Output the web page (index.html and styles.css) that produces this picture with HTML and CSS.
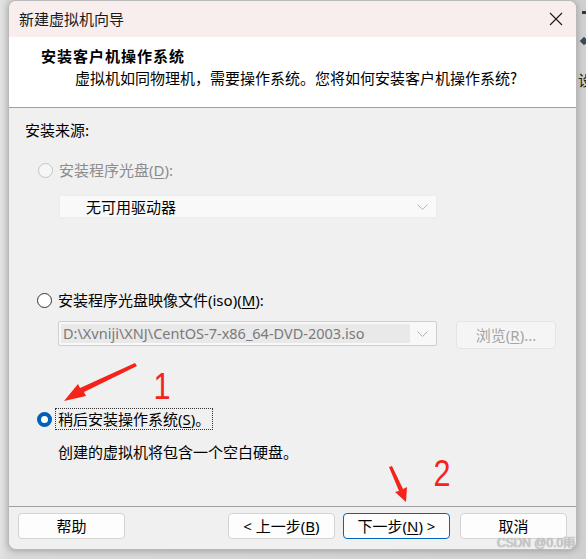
FILE: index.html
```html
<!DOCTYPE html>
<html lang="zh">
<head>
<meta charset="utf-8">
<title>新建虚拟机向导</title>
<link rel="stylesheet" href="styles.css">
</head>
<body>
<div class="desk">
  <div class="bgwin">
    <span class="bg-t"></span>
    <span class="bg-d"></span>
    <span class="bg-c">设</span>
  </div>
  <div class="dialog">
    <div class="titlebar">
      <span class="title">新建虚拟机向导</span>
      <svg class="close" width="14" height="14" viewBox="0 0 14 14"><path d="M1 1 L13 13 M13 1 L1 13" stroke="#1a1a1a" stroke-width="1.1" fill="none"/></svg>
    </div>
    <div class="header">
      <div class="h-title">安装客户机操作系统</div>
      <div class="h-sub">虚拟机如同物理机，需要操作系统。您将如何安装客户机操作系统?</div>
    </div>
    <div class="body">
      <div class="src-label">安装来源:</div>
      <div class="option disabled opt1">
        <span class="radio"></span>
        <span class="label">安装程序光盘(<u>D</u>):</span>
      </div>
      <div class="select disabled-select">
        <span class="sel-text">无可用驱动器</span>
        <svg class="chev" width="11" height="6" viewBox="0 0 11 6"><path d="M0.5 0.5 L5.5 5.5 L10.5 0.5" stroke="#b8b8b8" fill="none"/></svg>
      </div>
      <div class="option opt2">
        <span class="radio"></span>
        <span class="label">安装程序光盘映像文件(iso)(<u>M</u>):</span>
      </div>
      <div class="combo-row">
        <div class="combo">
          <span class="combo-text">D:\Xvniji\XNJ\CentOS-7-x86_64-DVD-2003.iso</span>
          <svg class="chev" width="11" height="6" viewBox="0 0 11 6"><path d="M0.5 0.5 L5.5 5.5 L10.5 0.5" stroke="#b0b0b0" fill="none"/></svg>
        </div>
        <div class="browse">浏览(<u>R</u>)...</div>
      </div>
      <div class="option opt3">
        <span class="radio checked"></span>
        <span class="label focus">稍后安装操作系统(<u>S</u>)。</span>
      </div>
      <div class="desc">创建的虚拟机将包含一个空白硬盘。</div>
    </div>
    <div class="footer">
      <div class="btn">帮助</div>
      <div class="spacer"></div>
      <div class="btn">&lt; 上一步(<u>B</u>)</div>
      <div class="btn primary">下一步(<u>N</u>) &gt;</div>
      <div class="btn">取消</div>
    </div>
    <div class="num n1">1</div>
    <div class="num n2">2</div>
    <svg class="arrows" width="569" height="550" viewBox="0 0 569 550">
      <polygon fill="#f5231a" points="127,363 129,366 76,392 78,396 56,401 70,384 72,388"/>
      <polygon fill="#f5231a" points="381,467 384,466 395,489 399,487 398,502 387,492 391,491"/>
    </svg>
  </div>
  <div class="watermark">CSDN @0.0雨</div>
</div>
</body>
</html>
```

FILE: styles.css
```css
* { box-sizing: border-box; }
html, body { margin: 0; padding: 0; }
body {
  width: 586px;
  height: 559px;
  overflow: hidden;
  background: linear-gradient(to right, #e2e2e2 0px, #d9d9d9 8px, #d2d2d2 100%);
  font-family: "Noto Sans", "Noto Sans CJK SC", sans-serif;
  font-size: 15px;
  color: #000;
}
.desk {
  position: relative;
  width: 586px;
  height: 559px;
  padding-left: 8px;
}
.bgwin {
  position: absolute;
  left: 577px;
  top: 0;
  width: 9px;
  height: 559px;
  background: #d0d0d0;
  overflow: hidden;
}
.bg-t {
  position: absolute;
  left: 5px;
  top: 11px;
  width: 4px;
  height: 3px;
  background: #2a3a4a;
}
.bg-d {
  position: absolute;
  left: 4px;
  top: 38px;
  width: 6px;
  height: 6px;
  background: #3a4a5a;
  transform: rotate(45deg);
}
.bg-c {
  position: absolute;
  left: 1px;
  top: 71px;
  font-size: 15px;
  line-height: 18px;
  font-family: "Noto Sans CJK SC", sans-serif;
  color: #222;
}
.dialog {
  position: relative;
  width: 569px;
  height: 550px;
  background: #f0f0f0;
  border-radius: 8px;
  border: 1px solid #b9b9b9;
  box-shadow: 0 1px 6px rgba(0,0,0,0.25);
  overflow: hidden;
  display: flex;
  flex-direction: column;
}
.titlebar {
  height: 36px;
  flex: none;
  background: #f7eeed;
  display: flex;
  align-items: center;
  justify-content: space-between;
  padding: 0 13px 0 10px;
}
.title {
  font-family: "Noto Sans CJK SC", sans-serif;
  font-size: 15px;
  line-height: 20px;
  color: #1a1a1a;
}
.header {
  height: 71px;
  flex: none;
  background: #ffffff;
  border-bottom: 1px solid #a0a0a0;
  padding: 9px 0 0 32px;
}
.h-title {
  font-family: "Noto Sans CJK SC", sans-serif;
  font-weight: bold;
  font-size: 15px;
  line-height: 20px;
  letter-spacing: 1px;
}
.h-sub {
  font-family: "Noto Sans CJK SC", sans-serif;
  margin-top: 2px;
  margin-left: 34px;
  line-height: 20px;
}
.body {
  flex: 1;
  padding: 12px 16px 0 16px;
  display: flex;
  flex-direction: column;
  align-items: flex-start;
}
.src-label {
  line-height: 20px;
  font-family: "Noto Sans CJK SC", sans-serif;
}
.option {
  display: flex;
  align-items: center;
  gap: 6px;
  margin-left: 12px;
  line-height: 20px;
}
.label { font-family: "Noto Sans", "Noto Sans CJK SC", sans-serif; }
.opt1 { margin-top: 20px; margin-left: 13px; }
.opt2 { margin-top: 72px; }
.opt3 { margin-top: 60px; gap: 4px; }
.radio {
  width: 15px;
  height: 15px;
  border-radius: 50%;
  border: 1px solid #333;
  background: #fff;
  flex: none;
}
.disabled .radio { border-color: #c4c4c4; background: #f6f6f6; }
.disabled .label { color: #8c8c8c; }
.radio.checked {
  border: 4px solid #005fb8;
  background: #fff;
}
.focus {
  outline: 1px dotted #333;
  padding: 0 2px;
}
u { text-decoration: underline; text-underline-offset: 2px; }
.select {
  margin-top: 15px;
  margin-left: 34px;
  width: 378px;
  height: 23px;
  background: #f9f9f9;
  border: 1px solid #ececec;
  border-radius: 2px;
  display: flex;
  align-items: center;
  justify-content: space-between;
  padding: 0 8px 0 26px;
}
.sel-text {
  font-family: "Noto Sans CJK SC", sans-serif;
  line-height: 20px;
}
.combo-row {
  margin-top: 11px;
  margin-left: 33px;
  display: flex;
  align-items: flex-start;
  gap: 19px;
}
.combo {
  width: 379px;
  height: 25px;
  background: #f8f8f8;
  border: 1px solid #cfcfcf;
  border-radius: 2px;
  display: flex;
  align-items: center;
  justify-content: space-between;
  padding: 2px 8px 2px 2px;
}
.combo-text {
  background: #e9e9e9;
  width: 349px;
  height: 19px;
  line-height: 19px;
  padding-left: 2px;
  color: #7a7a7a;
  font-family: "Noto Sans", sans-serif;
  font-size: 14.5px;
  white-space: nowrap;
  overflow: hidden;
}
.browse {
  width: 100px;
  height: 28px;
  background: #f5f5f5;
  border: 1px solid #e4e4e4;
  border-radius: 4px;
  color: #a5a5a5;
  display: flex;
  align-items: center;
  justify-content: center;
  line-height: 20px;
}
.desc {
  margin-top: 13px;
  margin-left: 33px;
  line-height: 20px;
  font-family: "Noto Sans CJK SC", sans-serif;
}
.footer {
  flex: none;
  height: 43px;
  border-top: 1px solid #a0a0a0;
  display: flex;
  align-items: flex-start;
  gap: 8px;
  padding: 6px 9px 0 9px;
}
.spacer { flex: 1; }
.btn {
  width: 107px;
  height: 26px;
  background: #fdfdfd;
  border: 1px solid #d3d3d3;
  border-radius: 4px;
  display: flex;
  align-items: center;
  justify-content: center;
  line-height: 20px;
  font-family: "Noto Sans", "Noto Sans CJK SC", sans-serif;
}
.btn.primary { border-color: #0067c0; margin-right: 2px; }
.num {
  position: absolute;
  color: #f5231a;
  font-family: "Liberation Sans", sans-serif;
  font-size: 36px;
  line-height: 36px;
  transform: scaleX(0.85);
}
.n1 { left: 143px; top: 368px; }
.n2 { left: 423px; top: 455px; }
.arrows {
  position: absolute;
  left: -1px;
  top: -1px;
  pointer-events: none;
}
.watermark {
  position: absolute;
  left: 497px;
  top: 537px;
  font-family: "Liberation Sans", "Noto Sans CJK SC", sans-serif;
  font-size: 12px;
  line-height: 13px;
  color: #cfcfcf;
  text-shadow: 0 0 1px #7a7a7a;
  white-space: nowrap;
}
```
